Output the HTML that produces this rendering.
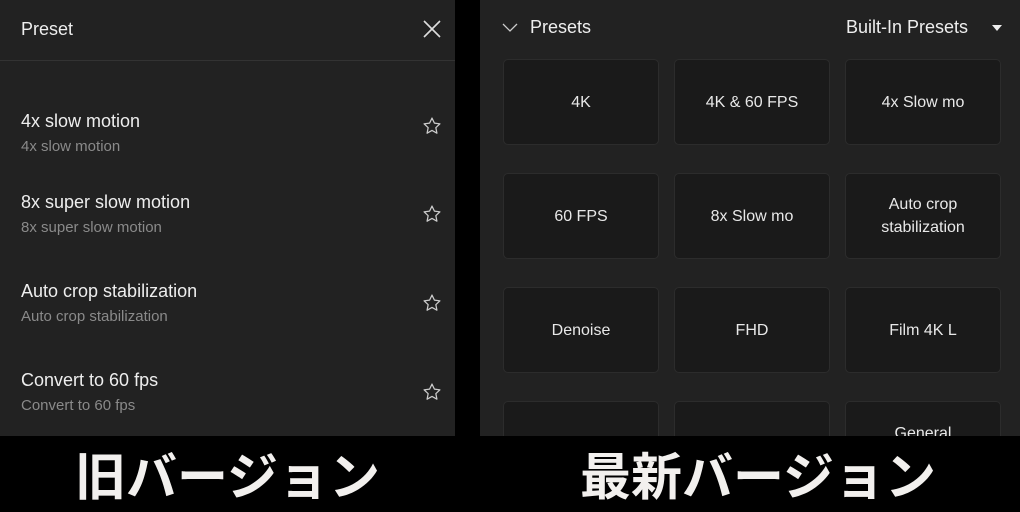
<!DOCTYPE html>
<html><head><meta charset="utf-8"><style>
*{margin:0;padding:0;box-sizing:border-box}
body{width:1020px;height:512px;background:#000;position:relative;overflow:hidden;font-family:"Liberation Sans","Noto Sans CJK JP",sans-serif}
.p{position:absolute;background:#222;top:0;height:436px}
.t{position:absolute;color:#eee;white-space:nowrap}
.card{position:absolute;width:156px;height:86px;background:#1a1a1a;border:1px solid #2c2c2c;border-radius:5px;color:#e8e8e8;font-size:16px;display:flex;align-items:center;justify-content:center;text-align:center;line-height:23px}
.big{position:absolute;top:441px;color:#f2f0ee;font-size:51px;font-weight:bold;font-family:"Noto Sans CJK JP",sans-serif;line-height:64px;white-space:nowrap}
</style></head><body>
<div class="p" style="left:0;width:455px">
<div class="t" style="left:21px;top:19px;font-size:18px">Preset</div>
<svg style="position:absolute;left:423px;top:20px" width="18" height="18"><path d="M1 1L17 17M17 1L1 17" stroke="#ddd" stroke-width="1.6"/></svg>
<div style="position:absolute;left:0;top:60px;width:455px;height:1px;background:#333"></div>
<div class="t" style="left:21px;top:111px;font-size:18px">4x slow motion</div>
<div class="t" style="left:21px;top:138px;font-size:15px;color:#8a8a8a">4x slow motion</div>
<div class="t" style="left:21px;top:192px;font-size:18px">8x super slow motion</div>
<div class="t" style="left:21px;top:219px;font-size:15px;color:#8a8a8a">8x super slow motion</div>
<div class="t" style="left:21px;top:281px;font-size:18px">Auto crop stabilization</div>
<div class="t" style="left:21px;top:308px;font-size:15px;color:#8a8a8a">Auto crop stabilization</div>
<div class="t" style="left:21px;top:370px;font-size:18px">Convert to 60 fps</div>
<div class="t" style="left:21px;top:397px;font-size:15px;color:#8a8a8a">Convert to 60 fps</div>
<svg style="position:absolute;left:422px;top:116px" width="20" height="20" viewBox="0 0 24 24"><path d="M12 2.5l2.9 6.1 6.6.8-4.9 4.6 1.3 6.6L12 17.3l-5.9 3.3 1.3-6.6-4.9-4.6 6.6-.8z" fill="none" stroke="#ccc" stroke-width="1.5" stroke-linejoin="round"/></svg>
<svg style="position:absolute;left:422px;top:204px" width="20" height="20" viewBox="0 0 24 24"><path d="M12 2.5l2.9 6.1 6.6.8-4.9 4.6 1.3 6.6L12 17.3l-5.9 3.3 1.3-6.6-4.9-4.6 6.6-.8z" fill="none" stroke="#ccc" stroke-width="1.5" stroke-linejoin="round"/></svg>
<svg style="position:absolute;left:422px;top:293px" width="20" height="20" viewBox="0 0 24 24"><path d="M12 2.5l2.9 6.1 6.6.8-4.9 4.6 1.3 6.6L12 17.3l-5.9 3.3 1.3-6.6-4.9-4.6 6.6-.8z" fill="none" stroke="#ccc" stroke-width="1.5" stroke-linejoin="round"/></svg>
<svg style="position:absolute;left:422px;top:382px" width="20" height="20" viewBox="0 0 24 24"><path d="M12 2.5l2.9 6.1 6.6.8-4.9 4.6 1.3 6.6L12 17.3l-5.9 3.3 1.3-6.6-4.9-4.6 6.6-.8z" fill="none" stroke="#ccc" stroke-width="1.5" stroke-linejoin="round"/></svg>
</div>
<div class="p" style="left:480px;width:540px">
<svg style="position:absolute;left:22px;top:23px" width="16" height="10"><path d="M1 1L8 8L15 1" fill="none" stroke="#ccc" stroke-width="1.3"/></svg>
<div class="t" style="left:50px;top:17px;font-size:18px">Presets</div>
<div class="t" style="left:366px;top:17px;font-size:18px">Built-In Presets</div>
<svg style="position:absolute;left:511px;top:24px" width="12" height="8"><path d="M1 1H11L6 7z" fill="#eee"/></svg>
<div class="card" style="left:23px;top:59px">4K</div>
<div class="card" style="left:194px;top:59px">4K &amp; 60 FPS</div>
<div class="card" style="left:365px;top:59px">4x Slow mo</div>
<div class="card" style="left:23px;top:173px">60 FPS</div>
<div class="card" style="left:194px;top:173px">8x Slow mo</div>
<div class="card" style="left:365px;top:173px">Auto crop<br>stabilization</div>
<div class="card" style="left:23px;top:287px">Denoise</div>
<div class="card" style="left:194px;top:287px">FHD</div>
<div class="card" style="left:365px;top:287px">Film 4K L</div>
<div class="card" style="left:23px;top:401px"></div>
<div class="card" style="left:194px;top:401px"></div>
<div class="card" style="left:365px;top:401px;align-items:flex-start;padding-top:20px">General</div>
</div>
<div style="position:absolute;left:0;top:436px;width:1020px;height:76px;background:#000"></div>
<div class="big" style="left:75px">旧バージョン</div>
<div class="big" style="left:580px">最新バージョン</div>
</body></html>
